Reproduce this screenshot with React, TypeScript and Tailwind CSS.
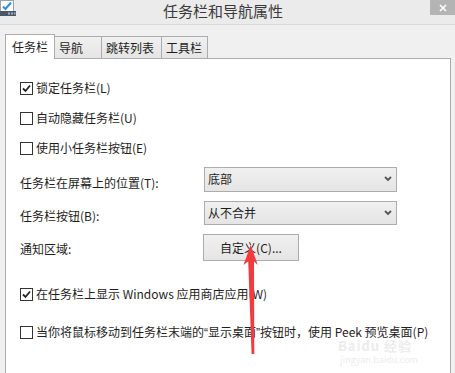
import React from 'react'

const FONT = "font-['Noto_Sans_CJK_SC','Microsoft_YaHei',sans-serif]"

function TitleIcon() {
  return (
    <svg width="16" height="17" viewBox="0 0 16 17" className="shrink-0">
      <rect x="0.5" y="0.5" width="13" height="11" fill="#fff" stroke="#9aa3ad" />
      <path d="M3 6.5 L5.5 9 L11 2.5" stroke="#2f8fe0" strokeWidth="2" fill="none" />
      <rect x="0" y="11" width="16" height="5" fill="#4a5567" />
      <rect x="8" y="12.5" width="2" height="2" fill="#9fb0c6" />
      <rect x="11" y="12.5" width="2" height="2" fill="#9fb0c6" />
      <rect x="14" y="12.5" width="1.5" height="2" fill="#9fb0c6" />
    </svg>
  )
}

function CheckBox({ checked, children }: { checked?: boolean; children: React.ReactNode }) {
  return (
    <div className="flex h-[30px] items-center gap-[3px]">
      <div className="flex h-[13px] w-[13px] shrink-0 items-center justify-center border border-[#333] bg-white">
        {checked && (
          <svg width="9" height="9" viewBox="0 0 9 9">
            <path d="M1 4.5 L3.5 7 L8 1.5" stroke="#222" strokeWidth="1.8" fill="none" />
          </svg>
        )}
      </div>
      <span className="whitespace-nowrap text-[12px] text-[#1e1e1e]">{children}</span>
    </div>
  )
}

function Select({ value, className = '' }: { value: string; className?: string }) {
  return (
    <div className={`flex w-[193px] items-center justify-between border border-[#acacac] bg-gradient-to-b from-[#f0f0f0] to-[#e5e5e5] pl-[3px] pr-[4px] text-[12px] text-[#1e1e1e] ${className}`}>
      <span>{value}</span>
      <svg width="8" height="6" viewBox="0 0 8 6">
        <path d="M1 1 L4 4 L7 1" stroke="#555" strokeWidth="1.8" fill="none" />
      </svg>
    </div>
  )
}

export default function App() {
  const tabs = ['导航', '跳转列表', '工具栏']
  const tabWidths = ['w-[47px]', 'w-[60px]', 'w-[46px]']
  const q = "font-['Liberation_Sans',sans-serif]"

  return (
    <div className={`relative h-[373px] w-[455px] overflow-hidden bg-[#f0f0f0] ${FONT}`}>
      {/* Title bar */}
      <div className="relative flex h-[25px] items-start border-b border-[#d8d8d8] bg-[#ebebeb]">
        <TitleIcon />
        <div className="flex-1 pt-[1px] text-center text-[15px] leading-[20px] text-[#3a3a3a]">任务栏和导航属性</div>
        <div className="flex h-[15px] w-[25px] items-center justify-center bg-[#b4b4b4]">
          <svg width="8" height="8" viewBox="0 0 8 8">
            <path d="M1 1 L7 7 M7 1 L1 7" stroke="#fff" strokeWidth="1.6" />
          </svg>
        </div>
      </div>

      {/* Tabs */}
      <div className="mt-[9px] flex items-start pl-[5px]">
        <div className="relative z-10 -mb-px flex h-[25px] w-[50px] items-start justify-center border border-b-0 border-[#acacac] bg-white pt-[3px] text-[12px] text-[#1e1e1e]">
          任务栏
        </div>
        {tabs.map((t, i) => (
          <div
            key={t}
            className={`mt-[2px] flex h-[22px] ${tabWidths[i]} items-center border border-l-0 border-b-0 border-[#acacac] bg-gradient-to-b from-[#f0f0f0] to-[#e5e5e5] pl-[4px] text-[12px] text-[#1e1e1e]`}
          >
            {t}
          </div>
        ))}
      </div>

      {/* Panel */}
      <div className="ml-[5px] mr-[4px] h-[330px] border border-[#acacac] bg-white pl-[14px] pt-[14px]">
        <CheckBox checked>锁定任务栏(L)</CheckBox>
        <CheckBox>自动隐藏任务栏(U)</CheckBox>
        <CheckBox>使用小任务栏按钮(E)</CheckBox>

        <div className="mt-[3px] flex items-center">
          <span className="w-[184px] pt-[8px] text-[12px] text-[#1e1e1e]">任务栏在屏幕上的位置(T):</span>
          <Select value="底部" className="h-[25px]" />
        </div>
        <div className="mt-[9px] flex items-center">
          <span className="w-[184px] pt-[6px] text-[12px] text-[#1e1e1e]">任务栏按钮(B):</span>
          <Select value="从不合并" className="h-[24px]" />
        </div>
        <div className="mt-[9px] flex items-center">
          <span className="w-[183px] pt-[3px] text-[12px] text-[#1e1e1e]">通知区域:</span>
          <div className="flex h-[27px] w-[96px] items-center justify-center border border-[#acacac] bg-gradient-to-b from-[#f0f0f0] to-[#e5e5e5] text-[12px] text-[#1e1e1e]">
            自定义(C)...
          </div>
        </div>

        <div className="mt-[18px]">
          <CheckBox checked>在任务栏上显示 Windows 应用商店应用(W)</CheckBox>
        </div>
        <div className="mt-[8px]">
          <CheckBox>
            当你将鼠标移动到任务栏末端的<span className={q}>“</span>显示桌面<span className={q}>”</span>按钮时，使用 Peek 预览桌面(P)
          </CheckBox>
        </div>
      </div>

      {/* Watermark */}
      <div className="pointer-events-none absolute left-[338px] top-[339px] text-[13px] font-bold leading-[13px] tracking-[1px] text-[#ececec]">
        Baidu 经验
      </div>
      <div className="pointer-events-none absolute left-[340px] top-[355px] text-[9px] leading-[9px] text-[#ececec]">
        jingyan.baidu.com
      </div>

      {/* Red annotation arrow */}
      <svg className="pointer-events-none absolute left-0 top-0" width="455" height="373" viewBox="0 0 455 373">
        <polygon
          points="250.7,245 257.8,265 254,261.5 254.3,354 251.6,354 248.2,261.5 243.5,265"
          fill="#f23b3f"
        />
      </svg>
    </div>
  )
}
